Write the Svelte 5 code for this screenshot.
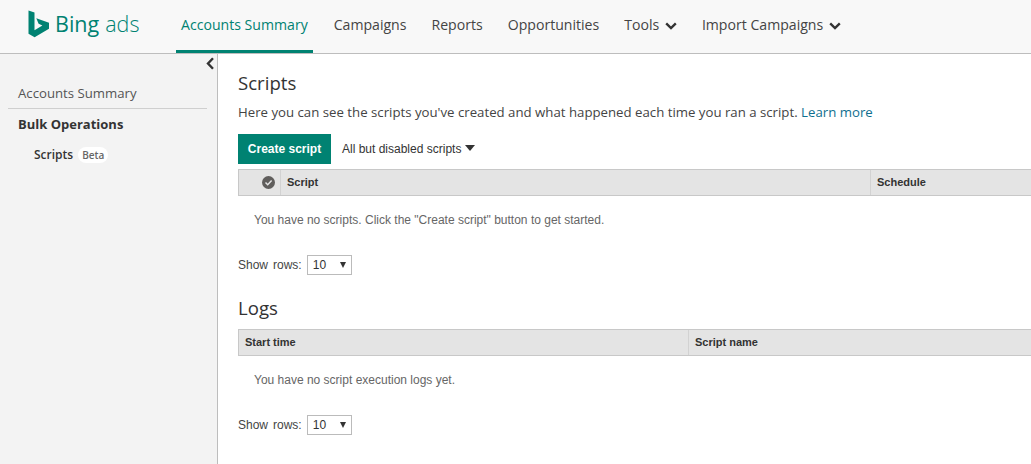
<script>
  const tabs = [
    { label: 'Accounts Summary', active: true },
    { label: 'Campaigns' },
    { label: 'Reports' },
    { label: 'Opportunities' },
    { label: 'Tools', menu: true },
    { label: 'Import Campaigns', menu: true }
  ];
</script>

<div class="page">
  <header class="topbar">
    <div class="logo">
      <svg width="22" height="29" viewBox="0 0 22 29">
        <path d="M0.5 0.5 L6.5 2.6 V20.2 L14.4 15.6 L10.6 13.8 L8.3 8.2 L21 12.7 V18.8 L6.6 27.2 L0.5 23.8 Z" fill="#008272" />
      </svg>
      <span class="logo-bing">Bing</span>
      <span class="logo-ads">ads</span>
    </div>
    <nav class="tabs">
      {#each tabs as tab}
        <div class="tab" class:active={tab.active}>
          {tab.label}
          {#if tab.menu}
            <svg width="12" height="8" viewBox="0 0 12 8">
              <path d="M1.2 1.4 L6 6 L10.8 1.4" fill="none" stroke="#333" stroke-width="2.4" />
            </svg>
          {/if}
        </div>
      {/each}
    </nav>
  </header>

  <div class="body">
    <aside class="sidebar">
      <div class="collapse">
        <svg width="9" height="13" viewBox="0 0 9 13">
          <path d="M7 1.2 L2 6.5 L7 11.8" fill="none" stroke="#333" stroke-width="2.4" />
        </svg>
      </div>
      <div class="side-link">Accounts Summary</div>
      <div class="side-group">Bulk Operations</div>
      <div class="side-item">Scripts <span class="beta">Beta</span></div>
    </aside>

    <main class="content">
      <h1>Scripts</h1>
      <p class="intro">Here you can see the scripts you've created and what happened each time you ran a script. <span class="link">Learn more</span></p>
      <div class="toolbar">
        <button class="primary">Create script</button>
        <div class="filter">All but disabled scripts <span class="caret"></span></div>
      </div>
      <div class="grid-head">
        <div class="cell check">
          <svg width="13" height="13" viewBox="0 0 13 13">
            <circle cx="6.5" cy="6.5" r="6.5" fill="#605e5c" />
            <path d="M3.5 6.5 L5.7 8.7 L9.6 4.6" fill="none" stroke="#e4e4e4" stroke-width="1.5" />
          </svg>
        </div>
        <div class="cell script">Script</div>
        <div class="cell">Schedule</div>
      </div>
      <div class="empty">You have no scripts. Click the "Create script" button to get started.</div>
      <div class="pager">
        <span>Show</span><span>rows:</span>
        <div class="rows">10 <span class="arrow"></span></div>
      </div>

      <h1 class="logs">Logs</h1>
      <div class="grid-head">
        <div class="cell start">Start time</div>
        <div class="cell">Script name</div>
      </div>
      <div class="empty">You have no script execution logs yet.</div>
      <div class="pager">
        <span>Show</span><span>rows:</span>
        <div class="rows">10 <span class="arrow"></span></div>
      </div>
    </main>
  </div>
</div>

<style>
  :global(body) {
    margin: 0;
    background: #fff;
    overflow: hidden;
  }

  .page {
    height: 464px;
    display: flex;
    flex-direction: column;
    font-family: "Liberation Sans", Arial, sans-serif;
    color: #444;
  }

  .topbar {
    height: 54px;
    box-sizing: border-box;
    flex-shrink: 0;
    display: flex;
    background: #f8f8f8;
    border-bottom: 1px solid #bdbdbd;
    font-family: "Open Sans", sans-serif;
  }

  .logo {
    width: 176px;
    padding: 10px 0 0 28px;
    box-sizing: border-box;
    display: flex;
    align-items: flex-start;
    color: #008272;
    font-size: 21.5px;
    line-height: 27px;
  }

  .logo-bing {
    margin-left: 5px;
  }

  .logo-ads {
    margin-left: 6px;
    font-weight: 300;
  }

  .tabs {
    display: flex;
    font-size: 14.1px;
    color: #444;
  }

  .tab {
    padding: 0 12.5px;
    height: 53px;
    line-height: 50px;
    box-sizing: border-box;
    white-space: nowrap;
  }

  .tab.active {
    padding: 0 5px;
    margin-right: 8.5px;
    color: #008272;
    border-bottom: 3px solid #008272;
  }

  .tab svg {
    margin-left: 2px;
  }

  .body {
    flex: 1;
    display: flex;
    min-height: 0;
  }

  .sidebar {
    width: 218px;
    flex-shrink: 0;
    box-sizing: border-box;
    background: #f3f3f3;
    border-right: 1px solid #bdbdbd;
    padding: 3px 10px 0 8px;
    font-family: "Open Sans", sans-serif;
  }

  .collapse {
    height: 14px;
    display: flex;
    justify-content: flex-end;
    margin-right: -8px;
  }

  .side-link {
    margin-top: 11px;
    padding: 0 0 3px 10px;
    font-size: 13.2px;
    line-height: 23px;
    border-bottom: 1px solid #cfcfcf;
    color: #555;
  }

  .side-group {
    margin-top: 4px;
    padding-left: 10px;
    font-size: 13px;
    line-height: 23px;
    font-weight: 700;
    color: #333;
  }

  .side-item {
    margin-top: 7px;
    padding-left: 26px;
    font-size: 12px;
    line-height: 23px;
    font-weight: 600;
    color: #333;
  }

  .beta {
    margin-left: 2px;
    padding: 1px 4px;
    border-radius: 8px;
    background: #fff;
    font-size: 10px;
    color: #666;
  }

  .content {
    flex: 1;
    min-width: 0;
    padding-left: 20px;
  }

  h1 {
    margin: 15px 0 0;
    font-family: "Open Sans", sans-serif;
    font-size: 18.6px;
    line-height: 28px;
    font-weight: 400;
    color: #333;
  }

  h1.logs {
    margin-top: 19px;
  }

  .intro {
    margin: 5px 0 0;
    font-family: "Open Sans", sans-serif;
    font-size: 13.22px;
    line-height: 20px;
    color: #444;
    white-space: nowrap;
  }

  .link {
    color: #0f6f8f;
  }

  .toolbar {
    margin-top: 12px;
    display: flex;
    align-items: center;
  }

  .primary {
    width: 93px;
    height: 30px;
    padding: 0;
    border: 0;
    background: #008272;
    color: #fff;
    font: 700 12px "Liberation Sans", Arial, sans-serif;
  }

  .filter {
    margin-left: 11px;
    font-size: 12px;
    color: #333;
  }

  .caret {
    display: inline-block;
    margin-left: 0;
    vertical-align: 2px;
    border: 5.5px solid transparent;
    border-top: 6px solid #333;
    border-bottom: 0;
  }

  .grid-head {
    margin-top: 5px;
    height: 27px;
    box-sizing: border-box;
    display: flex;
    background: #e4e4e4;
    border-style: solid;
    border-color: #c8c8c8;
    border-width: 1px 0 1px 1px;
    font-size: 11px;
    font-weight: 700;
    color: #333;
  }

  h1 + .grid-head {
    margin-top: 7px;
  }

  .cell {
    padding-left: 6px;
    line-height: 25px;
    white-space: nowrap;
  }

  .cell.check {
    width: 42px;
    padding: 6px 5px 0 0;
    box-sizing: border-box;
    display: flex;
    justify-content: flex-end;
    border-right: 1px solid #d2d2d2;
  }

  .cell.script {
    width: 590px;
    box-sizing: border-box;
    border-right: 1px solid #d2d2d2;
  }

  .cell.start {
    width: 450px;
    box-sizing: border-box;
    border-right: 1px solid #d2d2d2;
  }

  .empty {
    padding: 17px 0 0 16px;
    font-size: 12px;
    line-height: 15px;
    color: #666;
  }

  .pager {
    margin-top: 27px;
    display: flex;
    align-items: center;
    gap: 5px;
    font-size: 12px;
    color: #444;
  }

  .rows {
    width: 45px;
    height: 20px;
    box-sizing: border-box;
    border: 1px solid #bbb;
    padding-left: 5px;
    line-height: 18px;
    color: #333;
    position: relative;
  }

  .arrow {
    position: absolute;
    right: 5px;
    top: 6px;
    border: 3.5px solid transparent;
    border-top: 6px solid #333;
    border-bottom: 0;
  }
</style>
